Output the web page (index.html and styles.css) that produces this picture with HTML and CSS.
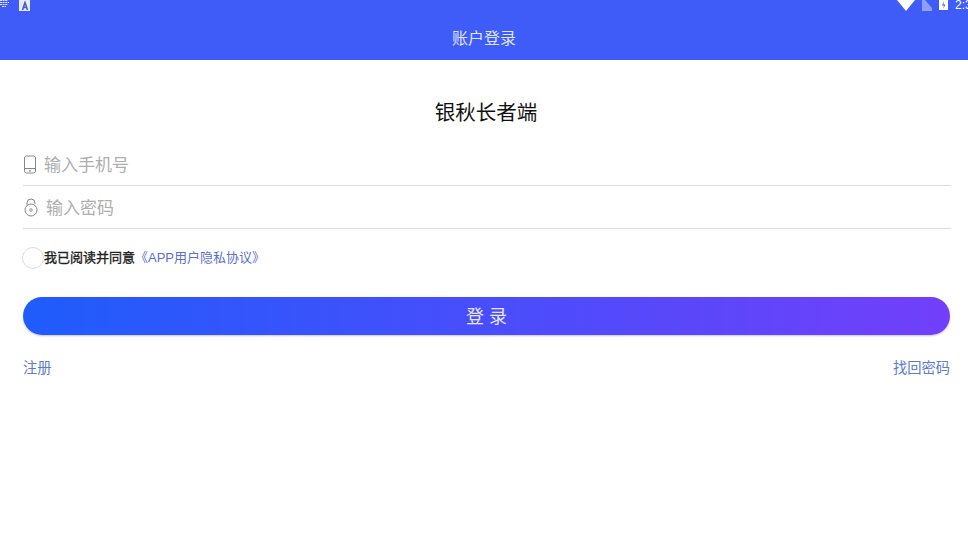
FILE: index.html
```html
<!DOCTYPE html>
<html lang="zh">
<head>
<meta charset="utf-8">
<title>账户登录</title>
<link rel="stylesheet" href="styles.css">
</head>
<body>
<div class="top">
	<div class="status">
		<div class="status-left">
			<svg class="note-icon" width="9" height="7" viewBox="0 0 9 7"><path d="M0 .5h8M0 2.500h9M0 4.500h8M2 6.500h4" stroke="#dfe6ff" stroke-width="1" stroke-dasharray="2 .6"/></svg>
			<span class="a-icon"><svg width="10" height="10" viewBox="0 0 10 10"><path d="M2.500 9L5 1.500 7.500 9M3.500 6.500h3" fill="none" stroke="#4a5ccc" stroke-width="1.600"/></svg></span>
		</div>
		<div class="status-right">
			<svg width="18" height="11" viewBox="0 0 18 11"><path d="M0 0h18L9 11z" fill="#fff"/></svg>
			<svg width="10" height="11" viewBox="0 0 10 11"><path d="M0 0h3l7 8v3H0z" fill="#8f9ff5"/></svg>
			<svg width="9" height="10" viewBox="0 0 9 10"><path d="M0 0h9v10H0z" fill="#fff"/><path d="M5 1L3 5.500h2L4 9l2.500-4.500h-2z" fill="#3f5cf8"/></svg>
			<span class="time">2:3</span>
		</div>
	</div>
	<div class="title">账户登录</div>
</div>

<div class="main">
	<h1 class="app-name">银秋长者端</h1>

	<div class="field field-phone">
		<svg class="field-icon" width="14" height="19" viewBox="0 0 14 19"><rect x="1.500" y="1" width="11" height="17" rx="2" fill="none" stroke="#888" stroke-width="1"/><path d="M1.500 13.500h11" stroke="#888" stroke-width="1"/><circle cx="7" cy="15.800" r=".9" fill="#888"/></svg>
		<span class="hint">输入手机号</span>
	</div>
	<div class="field field-pwd">
		<svg class="field-icon" width="16" height="19" viewBox="0 0 16 19"><circle cx="8" cy="12" r="6" fill="none" stroke="#888" stroke-width="1"/><path d="M4 7.500V5a4 4 0 0 1 8 0v1" fill="none" stroke="#888" stroke-width="1"/><circle cx="8" cy="12" r="1.300" fill="none" stroke="#888" stroke-width=".9"/></svg>
		<span class="hint">输入密码</span>
	</div>

	<div class="agree">
		<span class="radio"></span>
		<span class="agree-text">我已阅读并同意</span>
		<a class="agree-link" href="javascript:;">《APP用户隐私协议》</a>
	</div>

	<a class="login-btn" href="javascript:;">登 录</a>

	<div class="links">
		<a href="javascript:;">注册</a>
		<a href="javascript:;">找回密码</a>
	</div>
</div>
</body>
</html>
```

FILE: styles.css
```css
body,h1,div,a{ margin:0; padding:0;}
body{ background:#fff; font-family:"Liberation Sans","Noto Sans CJK SC",sans-serif; overflow:hidden;}
a{ text-decoration:none;}

.top{ height:60px; background:#3f5cf8;}
.status{ height:12px; display:flex; justify-content:space-between; align-items:flex-start; overflow:hidden;}
.status-left{ display:flex; align-items:flex-start; gap:10px;}
.note-icon{ display:block;}
.a-icon{ width:11px; height:11px; background:#e8ecff; display:flex; align-items:center; justify-content:center;}
.status-right{ display:flex; align-items:flex-start; gap:7px; margin-right:-4px;}
.status-right svg{ display:block;}
.time{ font-size:12px; line-height:10px; color:#fff; width:17px;}
.title{ margin-top:16px; text-align:center; font-size:16px; line-height:22px; color:#dfe4ff;}

.main{ padding:0 17px 0 23px;}
.app-name{ margin-top:38px; text-align:center; font-size:20.500px; line-height:30px; font-weight:normal; color:#111; padding-right:2px;}
.field{ height:43px; border-bottom:1px solid #ddd; display:flex; align-items:center; gap:7px; box-sizing:border-box;}
.field-phone{ margin-top:15px;}
.field-pwd{ gap:7px;}
.field-icon{ flex:none;}
.hint{ font-size:17px; color:#aeaeae; margin-bottom:2px;}

.agree{ margin-top:18px; height:21px; display:flex; align-items:center; font-size:13px;}
.radio{ width:20px; height:20px; border:1px solid #ddd; border-radius:50%; background:#fff; margin-left:-1px;}
.agree-text{ color:#222; -webkit-text-stroke:.35px #222; margin-bottom:2px;}
.agree-link{ color:#5a6fd0; margin-bottom:2px;}

.login-btn{ display:block; margin:29px 1px 0 0; height:38px; line-height:40px; border-radius:19px; text-align:center; font-size:18px; color:#e6e6ff; background:linear-gradient(90deg,#1f5cfb,#723ffa); box-shadow:0 1px 2px rgba(90,80,220,.35);}

.links{ margin:23px 1px 0 0; display:flex; justify-content:space-between; font-size:14.250px; line-height:20px;}
.links a{ color:#5d7bd0;}
```
